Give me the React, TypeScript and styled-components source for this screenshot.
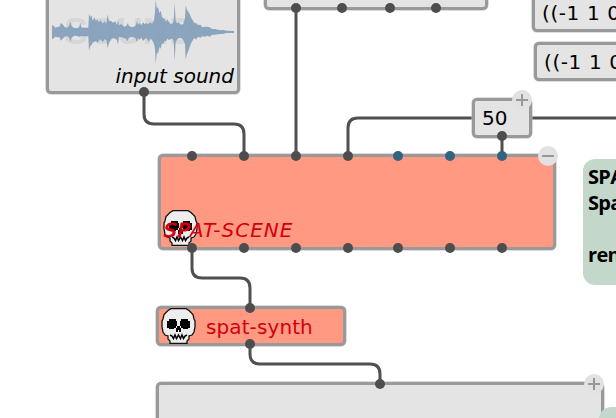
import React from 'react';
import styled, { createGlobalStyle } from 'styled-components';

const GlobalStyle = createGlobalStyle`
  body { margin: 0; background: #fff; }
  * { box-sizing: border-box; }
`;

const Patch = styled.main`
  position: relative;
  width: 616px;
  height: 418px;
  overflow: hidden;
  background: #fff;
  font-family: 'DejaVu Sans', Verdana, sans-serif;
`;

const Wires = styled.svg`
  position: absolute;
  inset: 0;
  fill: none;
  stroke: #505050;
  stroke-width: 3;
`;

/* A node on the free canvas; its contents are laid out by flex. */
const Box = styled.section<{ $x: number; $y: number; $w: number; $h: number; $error?: boolean }>`
  position: absolute;
  left: ${p => p.$x}px;
  top: ${p => p.$y}px;
  width: ${p => p.$w}px;
  height: ${p => p.$h}px;
  display: flex;
  align-items: center;
  padding: 0 7px;
  border: 3px solid #999;
  border-radius: 5px;
  box-shadow: 0 0 0 0.5px #bbb;
  background: ${p => (p.$error ? '#ff9982' : '#e4e4e4')};
`;

const SoundBox = styled(Box)`
  flex-direction: column;
  align-items: flex-start;
  justify-content: space-between;
  padding: 17px 3px 4px 3px;
`;

const SceneBox = styled(Box)`
  align-items: flex-end;
  padding: 0 2px 1px;
`;

const SynthBox = styled(Box)`
  gap: 10px;
  padding: 0 2px;
`;

const Label = styled.span<{ $error?: boolean; $italic?: boolean; $gap?: number }>`
  font-size: 20px;
  line-height: 24px;
  letter-spacing: ${p => p.$gap ?? 0}px;
  font-style: ${p => (p.$italic ? 'italic' : 'normal')};
  color: ${p => (p.$error ? '#d2000f' : '#000')};
  white-space: nowrap;
`;

const SoundName = styled(Label)`
  align-self: flex-end;
`;

const SynthName = styled(Label)`
  padding-top: 2px;
`;

/* The scene name is written across its status icon. */
const SceneName = styled(Label)`
  position: relative;
  margin: 0 0 4px -34px;
`;

const Heavy = styled.span`
  -webkit-text-stroke: 0.9px #d2000f;
`;

const PortRow = styled.div<{ $start: number; $edge: 'top' | 'bottom'; $gap?: number }>`
  position: absolute;
  z-index: 1;
  left: ${p => p.$start}px;
  ${p => p.$edge}: -6px;
  display: flex;
  gap: ${p => p.$gap ?? 0}px;
`;

const PortGroup = styled.div<{ $gap: number }>`
  display: flex;
  gap: ${p => p.$gap}px;
`;

const Port = styled.i<{ $optional?: boolean }>`
  width: 10px;
  height: 10px;
  border-radius: 50%;
  background: ${p => (p.$optional ? '#33637f' : '#4d4d4d')};
`;

const ToggleRoot = styled.svg<{ $right: number }>`
  position: absolute;
  right: ${p => p.$right}px;
  top: -11px;
  width: 20px;
  height: 20px;
`;

const Comment = styled.aside<{ $x: number; $y: number; $h: number }>`
  position: absolute;
  left: ${p => p.$x}px;
  top: ${p => p.$y}px;
  width: 200px;
  height: ${p => p.$h}px;
  padding: 5px;
  border-radius: 12px;
  background: #c3d8cb;
  color: #000;
  font: bold 20px/26px 'Open Sans', 'Noto Sans', sans-serif;
  letter-spacing: -0.7px;
  white-space: pre;
`;

const SkullIcon = styled.svg`
  flex: none;
  width: 35px;
  height: 36px;
`;

const WaveView = styled.svg`
  flex: none;
  width: 184px;
  height: 64px;
`;

const WatermarkText = styled.text`
  font: bold 36px 'Liberation Sans', sans-serif;
  fill: #d6d6d6;
`;

function Toggle({ right = -3, open }: { right?: number; open?: boolean }) {
  return (
    <ToggleRoot $right={right} viewBox="0 0 20 20">
      <circle cx="10" cy="10" r="10" fill="#e2e2e2" />
      <path d={open ? 'M4 10H16' : 'M4 10H16M10 4V16'} stroke="#989898" strokeWidth="2" />
    </ToggleRoot>
  );
}

function Skull() {
  return (
    <SkullIcon viewBox="0 0 35 36">
      <path
        d="M10 .6H25L28 2.5L32 6.5L33 11L34 13V19L33 24L31 27L28 28V31L26 33V35.4H9V33L7 31V28L4 27L2 24L1 19V13L2 11L3 6.5L7 2.5Z"
        fill="#ededed" stroke="#111" strokeWidth="1.3"
      />
      <path d="M8 11H15V13H16V18H15V20H13V21H8V20H6V13H8Z" fill="#050505" />
      <path d="M20 11H27V13H29V20H27V21H22V20H20V18H19V13H20Z" fill="#050505" />
      <path d="M16 18H19V20H20V24H18V22H17V24H15V20H16Z" fill="#050505" />
      <path d="M9 27L11 28L12.5 30.5L14 27L15.5 30.5L17.5 27L19.5 30.5L21 27L22.5 30.5L24 28L26 27" fill="none" stroke="#050505" strokeWidth="1.5" />
    </SkullIcon>
  );
}

// Envelope of the sound buffer: [time, peak above, peak below], in thirds of a pixel.
const envelope: [number, number, number][] = [
  [36, 20, 22], [42, 18, 18], [46, 13, 14], [54, 16, 16], [58, 15, 15], [63, 27, 26], [68, 23, 20],
  [74, 14, 14], [82, 13, 13], [88, 20, 18], [91, 31, 29], [95, 18, 17], [101, 12, 12], [110, 11, 11],
  [117, 14, 14], [121, 27, 14], [124, 14, 12], [132, 13, 13], [145, 13, 13], [147, 55, 56], [151, 44, 42],
  [155, 50, 38], [158, 34, 32], [163, 44, 29], [168, 33, 26], [172, 38, 33], [176, 30, 27], [182, 35, 22],
  [188, 26, 31], [194, 32, 22], [199, 25, 24], [203, 53, 48], [207, 32, 33], [213, 33, 22], [219, 28, 18],
  [226, 32, 20], [231, 21, 24], [234, 38, 38], [237, 20, 14], [244, 24, 16], [252, 16, 18], [259, 18, 22],
  [263, 27, 28], [267, 18, 17], [277, 14, 15], [286, 18, 18], [291, 32, 30], [294, 22, 18], [299, 28, 23],
  [304, 20, 17], [309, 29, 27], [314, 24, 22], [320, 26, 18], [326, 24, 30], [331, 30, 20], [336, 24, 24],
  [342, 36, 35], [345, 60, 50], [347, 96, 94], [351, 70, 60], [354, 76, 66], [358, 57, 45], [362, 64, 50],
  [366, 46, 34], [370, 40, 36], [374, 40, 26], [378, 31, 28], [382, 38, 20], [387, 30, 24], [393, 24, 21],
  [398, 26, 20], [401, 32, 30], [404, 88, 87], [407, 34, 30], [411, 26, 24], [416, 29, 18], [423, 22, 18],
  [430, 24, 24], [435, 42, 36], [437, 80, 82], [441, 66, 66], [444, 62, 59], [449, 54, 45], [454, 42, 32],
  [460, 32, 22], [464, 26, 18], [468, 27, 23], [474, 21, 14], [481, 22, 17], [487, 14, 13], [494, 16, 14],
  [502, 16, 11], [509, 14, 14], [517, 9, 8], [526, 9, 8], [534, 7, 7], [543, 5, 6], [551, 6, 5],
  [560, 4, 3], [582, 3, 3],
];

function Waveform() {
  const top = envelope.map(([x, a]) => `${x} ${96 - a}`);
  const bottom = envelope.map(([x, , b]) => `${x} ${96 + b}`).reverse();
  return (
    <WaveView viewBox="12 0 184 64">
      <WatermarkText x="24" y="44" textLength="131">SOUND</WatermarkText>
      <path transform="scale(.33333)" d={`M${top.concat(bottom).join('L')}Z`} fill="#87a1bd" fillOpacity=".95" />
    </WaveView>
  );
}

function ScenePorts({ edge }: { edge: 'top' | 'bottom' }) {
  const optional = edge === 'top';
  return (
    <PortRow $start={26} $edge={edge} $gap={40}>
      <PortGroup $gap={42}><Port /><Port /><Port /><Port /></PortGroup>
      <PortGroup $gap={42}>
        <Port $optional={optional} /><Port $optional={optional} /><Port $optional={optional} />
      </PortGroup>
    </PortRow>
  );
}

export default function App() {
  return (
    <Patch>
      <GlobalStyle />
      <Wires width="616" height="418">
        <path d="M144 91V114Q144 124 154 124H234Q244 124 244 134V156" />
        <path d="M296 8V156" />
        <path d="M348 156V128Q348 118 358 118H616" />
        <path d="M502 135V156" />
        <path d="M192 248V268Q192 278 202 278H240Q250 278 250 288V308" />
        <path d="M250 344V354Q250 364 260 364H370Q380 364 380 374V384" />
      </Wires>

      <SoundBox $x={46} $y={-20} $w={194} $h={114}>
        <Waveform />
        <SoundName $italic>input sound</SoundName>
        <PortRow $start={90} $edge="bottom"><Port /></PortRow>
      </SoundBox>

      <Box $x={264} $y={-30} $w={224} $h={40}>
        <PortRow $start={24} $edge="bottom" $gap={38}>
          <PortGroup $gap={36}><Port /><Port /></PortGroup>
          <PortGroup $gap={36}><Port /><Port /></PortGroup>
        </PortRow>
      </Box>

      <Box $x={532} $y={-7} $w={140} $h={39}>
        <Label $gap={0.6}>((-1 1 0</Label>
      </Box>
      <Box $x={534} $y={42} $w={140} $h={39}>
        <Label $gap={0.6}>((-1 1 0</Label>
      </Box>

      <Box $x={472} $y={98} $w={60} $h={40}>
        <Label>50</Label>
        <PortRow $start={22} $edge="bottom"><Port /></PortRow>
        <Toggle />
      </Box>

      <SceneBox $x={158} $y={154} $w={398} $h={96} $error>
        <Skull />
        <SceneName $italic $error $gap={1}><Heavy>SP</Heavy>AT-SCENE</SceneName>
        <ScenePorts edge="top" />
        <ScenePorts edge="bottom" />
        <Toggle right={-5} open />
      </SceneBox>

      <SynthBox $x={156} $y={306} $w={190} $h={40} $error>
        <Skull />
        <SynthName $error $gap={0.1}>spat-synth</SynthName>
        <PortRow $start={86} $edge="top"><Port /></PortRow>
        <PortRow $start={86} $edge="bottom"><Port /></PortRow>
      </SynthBox>

      <Box $x={156} $y={382} $w={448} $h={70}>
        <PortRow $start={216} $edge="top"><Port /></PortRow>
        <Toggle />
      </Box>

      <Comment $x={583} $y={159} $h={126}>{'SPAT\nSpat\n\nrender'}</Comment>
      <Comment $x={599} $y={407} $h={60}>S</Comment>
    </Patch>
  );
}
